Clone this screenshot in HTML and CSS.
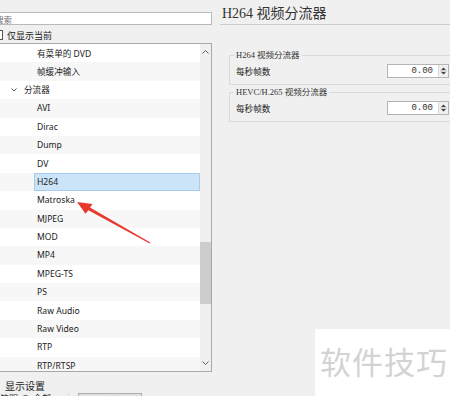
FILE: index.html
```html
<!DOCTYPE html>
<html lang="zh-CN">
<head>
    <meta charset="UTF-8">
    <meta name="viewport" content="width=device-width, initial-scale=1.0">
    <title>偏好设置 - 分流器</title>
    <link rel="stylesheet" href="styles.css">
</head>
<body>
    <div class="app">
        <div class="sidebar">
            <input type="text" class="search" placeholder="搜索">
            <label class="only-current"><span class="check"></span>仅显示当前</label>

            <div class="tree">
                <ul class="tree-rows">
                    <li class="row"><span class="item">有菜单的 DVD</span></li>
                    <li class="row"><span class="item">帧缓冲输入</span></li>
                    <li class="row category">
                        <svg class="chevron" width="6" height="4" viewBox="0 0 6 4"><path d="M0.5 0.5 L3 3 L5.5 0.5" fill="none" stroke="#555" stroke-width="1"/></svg>
                        <span class="cat-label">分流器</span>
                    </li>
                    <li class="row"><span class="item">AVI</span></li>
                    <li class="row"><span class="item">Dirac</span></li>
                    <li class="row"><span class="item">Dump</span></li>
                    <li class="row"><span class="item">DV</span></li>
                    <li class="row"><span class="item selected">H264</span></li>
                    <li class="row"><span class="item">Matroska</span></li>
                    <li class="row"><span class="item">MJPEG</span></li>
                    <li class="row"><span class="item">MOD</span></li>
                    <li class="row"><span class="item">MP4</span></li>
                    <li class="row"><span class="item">MPEG-TS</span></li>
                    <li class="row"><span class="item">PS</span></li>
                    <li class="row"><span class="item">Raw Audio</span></li>
                    <li class="row"><span class="item">Raw Video</span></li>
                    <li class="row"><span class="item">RTP</span></li>
                    <li class="row"><span class="item">RTP/RTSP</span></li>
                </ul>
                <div class="scrollbar">
                    <svg class="sb-arrow" width="7" height="4" viewBox="0 0 7 4"><path d="M0.5 3.5 L3.5 0.5 L6.5 3.5" fill="none" stroke="#606060" stroke-width="1"/></svg>
                    <div class="track"><div class="thumb"></div></div>
                    <svg class="sb-arrow" width="7" height="4" viewBox="0 0 7 4"><path d="M0.5 0.5 L3.5 3.5 L6.5 0.5" fill="none" stroke="#606060" stroke-width="1"/></svg>
                </div>
            </div>

            <div class="settings">
                <div class="settings-title">显示设置</div>
                <div class="settings-row">
                    <span>简明</span>
                    <span class="radio"></span>
                    <span>全部</span>
                    <span class="divider"></span>
                    <button class="reset">重置所有首选项</button>
                </div>
            </div>
        </div>

        <div class="panel">
            <h1 class="panel-title">H264 视频分流器</h1>

            <fieldset class="group">
                <legend>H264 视频分流器</legend>
                <div class="field">
                    <span class="field-label">每秒帧数</span>
                    <div class="spin">
                        <span class="spin-value">0.00</span>
                        <span class="spin-btns">
                            <svg width="7" height="10" viewBox="0 0 7 10"><path d="M1 4 L3.5 1.5 L6 4 Z M1 6 L3.5 8.5 L6 6 Z" fill="#444"/><path d="M0 5 H7" stroke="#999" stroke-width="0.6"/></svg>
                        </span>
                    </div>
                </div>
            </fieldset>

            <fieldset class="group second">
                <legend>HEVC/H.265 视频分流器</legend>
                <div class="field">
                    <span class="field-label">每秒帧数</span>
                    <div class="spin">
                        <span class="spin-value">0.00</span>
                        <span class="spin-btns">
                            <svg width="7" height="10" viewBox="0 0 7 10"><path d="M1 4 L3.5 1.5 L6 4 Z M1 6 L3.5 8.5 L6 6 Z" fill="#444"/><path d="M0 5 H7" stroke="#999" stroke-width="0.6"/></svg>
                        </span>
                    </div>
                </div>
            </fieldset>
        </div>
    </div>

    <div class="watermark">软件技巧</div>

    <svg class="annotation" width="450" height="396" viewBox="0 0 450 396">
        <polygon points="77,202 92.5,204 90,207.6 150.3,242.5 149.7,243.5 88.4,210.3 85.5,213.8" fill="#e8392f"/>
    </svg>
</body>
</html>
```

FILE: styles.css
```css
body {
    margin: 0;
    background-color: #f0f0f0;
    font-family: "Noto Sans", "Noto Sans CJK SC", sans-serif;
    color: #222;
    overflow: hidden;
    width: 450px;
    height: 396px;
    position: relative;
}

.app {
    display: flex;
    height: 396px;
}

/* left column */
.sidebar {
    width: 222px;
    margin-left: -10px;
    display: flex;
    flex-direction: column;
    flex-shrink: 0;
}

.sidebar > * {
    flex-shrink: 0;
}

.search {
    margin-top: 12px;
    height: 13px;
    box-sizing: border-box;
    width: 100%;
    border: 1px solid #b9b9b9;
    background-color: #fff;
    padding: 0 0 0 4px;
    font-family: "Noto Sans CJK SC", sans-serif;
    font-size: 8.5px;
    outline: none;
}

.search::placeholder {
    color: #6d6d6d;
}

.only-current {
    display: flex;
    align-items: center;
    height: 12px;
    margin-top: 4px;
    font-size: 9px;
    color: #222;
}

.check {
    width: 8px;
    height: 8px;
    border: 1px solid #555;
    background-color: #fff;
    margin: 0 4px 0 3px;
}

.tree {
    margin-top: 2px;
    height: 329px;
    box-sizing: border-box;
    border: 1px solid #a9a9a9;
    background-color: #fff;
    display: flex;
    overflow: hidden;
}

.tree-rows {
    list-style: none;
    margin: 0;
    padding: 0;
    flex: 1;
}

.row {
    display: flex;
    align-items: stretch;
    height: 18.4px;
    font-size: 8.6px;
    color: #222;
}

.row:nth-child(even) {
    background-color: #f7f7f7;
}

.item {
    flex: 1;
    margin-left: 43px;
    padding-left: 3px;
    display: flex;
    align-items: center;
    box-sizing: border-box;
}

.item.selected {
    background-color: #cce4f7;
    border: 1px solid #a6cdef;
    padding-left: 2px;
}

.category {
    align-items: center;
}

.chevron {
    margin-left: 20px;
}

.cat-label {
    margin-left: 7px;
}

.scrollbar {
    width: 11px;
    background-color: #f0f0f0;
    display: flex;
    flex-direction: column;
    align-items: center;
}

.sb-arrow {
    margin: 6px 0;
}

.track {
    flex: 1;
    width: 100%;
}

.thumb {
    margin-top: 182px;
    height: 62px;
    background-color: #cdcdcd;
}

.settings {
    padding-left: 15px;
    font-size: 10px;
}

.settings-title {
    margin-top: 7px;
    line-height: 14px;
    color: #222;
}

.settings-row {
    display: flex;
    align-items: flex-start;
    gap: 3px;
    margin-top: 0;
    margin-left: -5px;
    font-size: 9px;
    line-height: 12px;
}

.radio {
    width: 7px;
    height: 7px;
    border: 1px solid #444;
    border-radius: 50%;
    margin-top: 2px;
}

.divider {
    width: 1px;
    height: 12px;
    background-color: #dcdcdc;
    margin: 0 6px 0 14px;
}

.reset {
    font-family: inherit;
    font-size: 8px;
    height: 12px;
    padding: 0 3px;
    border: 1px solid #adadad;
    background-color: #e1e1e1;
}

/* right panel */
.panel {
    flex: 1;
    margin-left: 3px;
    margin-right: -6px;
}

.panel-title {
    margin: 4px 0 0 5px;
    padding-left: 2px;
    height: 20px;
    font-family: "Liberation Serif", "Noto Sans CJK SC", serif;
    font-size: 14px;
    font-weight: normal;
    line-height: 19px;
    color: #333;
    border-bottom: 1px solid #cbcbcb;
}

.group {
    margin: 24px 0 0 14px;
    padding: 3px 6px 6px 6px;
    border: 1px solid #dadada;
    min-width: 0;
}

.group.second {
    margin-top: 1px;
}

.group legend {
    margin-left: -2px;
    padding: 0 2px;
    font-family: "Liberation Serif", "Noto Sans CJK SC", serif;
    font-size: 8.5px;
    line-height: 12px;
    color: #333;
}

.field {
    display: flex;
    align-items: center;
    justify-content: space-between;
    height: 14px;
}

.field-label {
    font-size: 8.6px;
    color: #222;
}

.spin {
    width: 62px;
    height: 14px;
    box-sizing: border-box;
    border: 1px solid #b5b5b5;
    background-color: #fff;
    display: flex;
    align-items: center;
    justify-content: flex-end;
}

.spin-value {
    font-family: "Liberation Mono", monospace;
    font-size: 9px;
    color: #333;
    margin-right: 5px;
}

.spin-btns {
    display: flex;
    align-items: center;
    justify-content: center;
    width: 9px;
    height: 12px;
    background-color: #f0f0f0;
    border-left: 1px solid #d8d8d8;
}

/* overlays */
.watermark {
    position: absolute;
    left: 315px;
    top: 329px;
    right: 0;
    bottom: 0;
    background-color: #fff;
    padding: 12px 0 0 5px;
    font-family: "Noto Sans CJK SC", sans-serif;
    font-size: 31px;
    line-height: 40px;
    color: #d3d3d3;
    letter-spacing: 1px;
}

.annotation {
    position: absolute;
    left: 0;
    top: 0;
    pointer-events: none;
}
```
